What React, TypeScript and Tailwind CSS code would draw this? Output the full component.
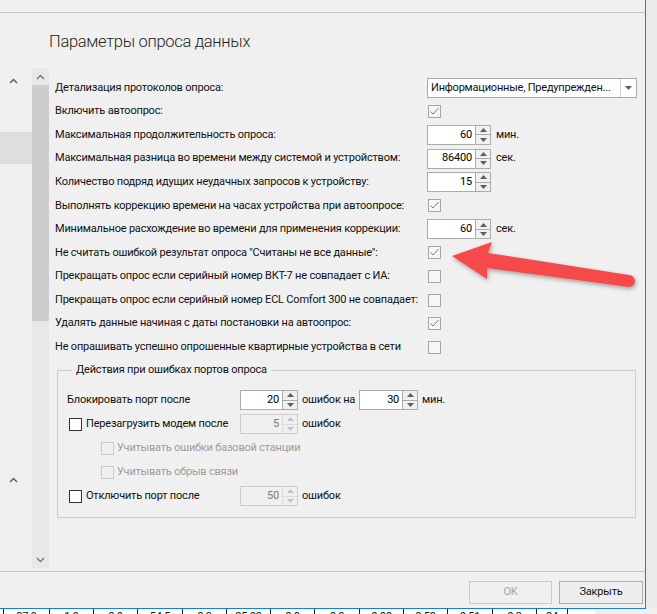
import React from "react"

type Ctl =
    | { kind: "combo"; value: string }
    | { kind: "check"; checked: boolean }
    | { kind: "num"; value: string; unit?: string }

const rows: { label: string; ctl: Ctl }[] = [
    { label: "Детализация протоколов опроса:", ctl: { kind: "combo", value: "Информационные, Предупрежден..." } },
    { label: "Включить автоопрос:", ctl: { kind: "check", checked: true } },
    { label: "Максимальная продолжительность опроса:", ctl: { kind: "num", value: "60", unit: "мин." } },
    { label: "Максимальная разница во времени между системой и устройством:", ctl: { kind: "num", value: "86400", unit: "сек." } },
    { label: "Количество подряд идущих неудачных запросов к устройству:", ctl: { kind: "num", value: "15" } },
    { label: "Выполнять коррекцию времени на часах устройства при автоопросе:", ctl: { kind: "check", checked: true } },
    { label: "Минимальное расхождение во времени для применения коррекции:", ctl: { kind: "num", value: "60", unit: "сек." } },
    { label: 'Не считать ошибкой результат опроса "Считаны не все данные":', ctl: { kind: "check", checked: true } },
    { label: "Прекращать опрос если серийный номер ВКТ-7 не совпадает с ИА:", ctl: { kind: "check", checked: false } },
    { label: "Прекращать опрос если серийный номер ECL Comfort 300 не совпадает:", ctl: { kind: "check", checked: false } },
    { label: "Удалять данные начиная с даты постановки на автоопрос:", ctl: { kind: "check", checked: true } },
    { label: "Не опрашивать успешно опрошенные квартирные устройства в сети", ctl: { kind: "check", checked: false } },
]

const cells = [
    { w: "w-[46px]", t: "27.9" },
    { w: "w-[44px]", t: "1.9" },
    { w: "w-[44px]", t: "0.0" },
    { w: "w-[45px]", t: "54.5" },
    { w: "w-[44px]", t: "0.3" },
    { w: "w-[44px]", t: "25.93" },
    { w: "w-[44px]", t: "0.0" },
    { w: "w-[45px]", t: "0.0" },
    { w: "w-[44px]", t: "0.00" },
    { w: "w-[44px]", t: "0.59" },
    { w: "w-[45px]", t: "0.51" },
    { w: "w-[44px]", t: "0.3" },
    { w: "w-[31px]", t: "24" },
    { w: "w-[28px]", t: "" },
]

function Chevron({ down = false, color = "#606060" }: { down?: boolean; color?: string }) {
    return (
        <svg width="9" height="6" viewBox="0 0 9 6">
            <polyline
                points={down ? "1,1 4.5,4.5 8,1" : "1,5 4.5,1.5 8,5"}
                fill="none"
                stroke={color}
                strokeWidth="1.5"
            />
        </svg>
    )
}

function CheckBox({ checked = false, variant = "soft" }: { checked?: boolean; variant?: "soft" | "dark" | "off" }) {
    const box =
        variant === "dark"
            ? "border-[#333333] bg-white"
            : variant === "off"
            ? "border-[#cccccc] bg-[#f0f0f0]"
            : "border-[#a6a6a6] bg-[#f6f6f6]"
    return (
        <div className={`flex h-[13px] w-[13px] shrink-0 items-center justify-center border ${box}`}>
            {checked && (
                <svg width="11" height="11" viewBox="0 0 11 11">
                    <polyline points="1.5,5.5 4,8 9.5,2" fill="none" stroke="#7a7a7a" strokeWidth="1" />
                </svg>
            )}
        </div>
    )
}

function Spin({ value, w, disabled = false }: { value: string; w: string; disabled?: boolean }) {
    const tri = disabled ? "#c4c4c4" : "#5f5f5f"
    return (
        <div className={`flex h-[20px] shrink-0 border ${w} ${disabled ? "border-[#cccccc]" : "border-[#ababab]"}`}>
            <div
                className={`flex flex-1 items-center justify-end pr-[3px] ${
                    disabled ? "bg-[#f0f0f0] text-[#7a7a7a]" : "bg-white text-black"
                }`}
            >
                {value}
            </div>
            <div className={`flex w-[15px] flex-col border-l ${disabled ? "border-[#dddddd]" : "border-[#ababab]"} bg-[#f0f0f0]`}>
                <div className={`flex flex-1 items-center justify-center border-b ${disabled ? "border-[#dddddd]" : "border-[#ababab]"}`}>
                    <svg width="7" height="4" viewBox="0 0 7 4">
                        <polygon points="0,4 3.5,0 7,4" fill={tri} />
                    </svg>
                </div>
                <div className="flex flex-1 items-center justify-center">
                    <svg width="7" height="4" viewBox="0 0 7 4">
                        <polygon points="0,0 3.5,4 7,0" fill={tri} />
                    </svg>
                </div>
            </div>
        </div>
    )
}

function Control({ ctl }: { ctl: Ctl }) {
    if (ctl.kind === "combo") {
        return (
            <div className="flex h-[20px] w-[210px] border border-[#ababab] bg-white">
                <div className="flex flex-1 items-center overflow-hidden whitespace-nowrap pl-[3px]">{ctl.value}</div>
                <div className="flex w-[16px] items-center justify-center border-l border-[#cccccc]">
                    <svg width="7" height="4" viewBox="0 0 7 4">
                        <polygon points="0,0 3.5,4 7,0" fill="#606060" />
                    </svg>
                </div>
            </div>
        )
    }
    if (ctl.kind === "check") {
        return (
            <div className="pl-[1px]">
                <CheckBox checked={ctl.checked} />
            </div>
        )
    }
    return (
        <div className="flex items-center gap-[5px]">
            <Spin value={ctl.value} w="w-[64px]" />
            {ctl.unit && <span>{ctl.unit}</span>}
        </div>
    )
}

export default function App() {
    return (
        <div className="relative h-[614px] w-[657px] overflow-hidden bg-[#f0f0f0] font-['Roboto',sans-serif] text-[11px] tracking-[-0.2px] text-[#111111]">
            <div className="flex h-[609px]">
                <div className="flex w-[646px] flex-col border-r border-b border-[#1a80d4]">
                    <div className="h-[13px] shrink-0 border-b border-[#c4c4c4]" />
                    <div className="flex h-[558px] shrink-0">
                        <div className="flex w-[32px] flex-col">
                            <div className="flex h-[10px] mt-[65px] justify-center pr-[6px]">
                                <Chevron />
                            </div>
                            <div className="mt-[44px] h-[32px] bg-[#dedede]" />
                            <div className="mt-[313px] flex justify-center pr-[6px]">
                                <Chevron />
                            </div>
                        </div>
                        <div className="mt-[55px] mb-[3px] flex w-[17px] flex-col bg-[#e8e8e8]">
                            <div className="flex h-[17px] items-center justify-center">
                                <Chevron color="#7a7a7a" />
                            </div>
                            <div className="h-[236px] bg-[#cdcdcd]" />
                            <div className="flex-1" />
                            <div className="flex h-[17px] items-center justify-center">
                                <Chevron down color="#7a7a7a" />
                            </div>
                        </div>
                        <div className="flex min-w-0 flex-1 flex-col">
                            <h1 className="pt-[17px] text-[16.5px] font-light leading-[24px] tracking-[-0.3px] text-[#1e1e1e]">
                                Параметры опроса данных
                            </h1>
                            <div className="mt-[22px] pl-[6px]">
                                {rows.map((r, i) => (
                                    <div key={i} className="flex h-[23.6px] items-center">
                                        <div className="w-[372px] shrink-0 whitespace-nowrap">{r.label}</div>
                                        <Control ctl={r.ctl} />
                                    </div>
                                ))}
                            </div>
                            <fieldset className="mt-[3px] ml-[8px] mr-[9px] border border-[#cdcdcd] pt-[10px] pb-[9px] pl-[9px]">
                                <legend className="ml-[5px] px-[4px] leading-[16px]">
                                    Действия при ошибках портов опроса
                                </legend>
                                <div className="flex h-[24px] items-center">
                                    <div className="w-[173px]">Блокировать порт после</div>
                                    <Spin value="20" w="w-[58px]" />
                                    <span className="ml-[4px]">ошибок на</span>
                                    <div className="ml-[4px]">
                                        <Spin value="30" w="w-[59px]" />
                                    </div>
                                    <span className="ml-[4px]">мин.</span>
                                </div>
                                <div className="flex h-[24px] items-center">
                                    <div className="flex w-[173px] items-center gap-[4px] whitespace-nowrap pl-[2px]">
                                        <CheckBox variant="dark" />
                                        <span>Перезагрузить модем после</span>
                                    </div>
                                    <Spin value="5" w="w-[58px]" disabled />
                                    <span className="ml-[4px]">ошибок</span>
                                </div>
                                <div className="flex h-[24px] items-center gap-[3px] pl-[34px] text-[#9d9d9d]">
                                    <CheckBox variant="off" />
                                    <span>Учитывать ошибки базовой станции</span>
                                </div>
                                <div className="flex h-[24px] items-center gap-[3px] pl-[34px] text-[#9d9d9d]">
                                    <CheckBox variant="off" />
                                    <span>Учитывать обрыв связи</span>
                                </div>
                                <div className="flex h-[24px] items-center">
                                    <div className="flex w-[173px] items-center gap-[4px] whitespace-nowrap pl-[2px]">
                                        <CheckBox variant="dark" />
                                        <span>Отключить порт после</span>
                                    </div>
                                    <Spin value="50" w="w-[58px]" disabled />
                                    <span className="ml-[4px]">ошибок</span>
                                </div>
                            </fieldset>
                        </div>
                    </div>
                    <div className="flex flex-1 items-start justify-end gap-[7px] border-t border-[#c4c4c4] pt-[9px] pr-[2px]">
                        <button className="h-[23px] w-[83px] border border-[#cccccc] bg-[#f0f0f0] text-[#a3a3a3]">OK</button>
                        <button className="h-[23px] w-[84px] border border-[#adadad] bg-[#eeeeee] text-[#111111]">Закрыть</button>
                    </div>
                </div>
                <div className="flex-1 bg-[#ebebeb]" />
            </div>
            <div className="flex h-[5px] w-[595px] bg-white">
                <div className="w-[3px]" />
                {cells.map((c, i) => (
                    <div key={i} className={`${c.w} shrink-0 border-l border-[#222222] pt-[1px] text-center leading-[14px]`}>
                        {c.t}
                    </div>
                ))}
            </div>
            <svg className="pointer-events-none absolute inset-0" width="657" height="614" viewBox="0 0 657 614">
                <defs>
                    <filter id="sh" x="-10%" y="-30%" width="130%" height="170%">
                        <feDropShadow dx="1" dy="2" stdDeviation="2" floodColor="#000" floodOpacity="0.35" />
                    </filter>
                </defs>
                <path
                    d="M452 256 L492 242 L488 253 L629 275 A6 6 0 0 1 629 287 L487 268 L487 279 Z"
                    fill="#f64848"
                    filter="url(#sh)"
                />
            </svg>
        </div>
    )
}
